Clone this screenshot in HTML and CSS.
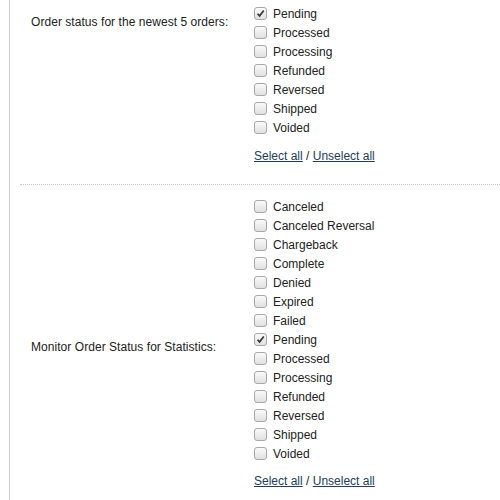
FILE: index.html
```html
<!DOCTYPE html>
<html>
<head>
<meta charset="utf-8">
<link rel="stylesheet" href="styles.css">
</head>
<body>
<div class="panel">
  <div class="row first">
    <div class="label top">Order status for the newest 5 orders:</div>
    <div class="options">
      <div class="opt"><span class="cb checked"><svg viewBox="0 0 12 12"><path d="M2.8 6.2 L5 8.6 L9.6 2.8" fill="none" stroke="#333" stroke-width="1.8"/></svg></span>Pending</div>
      <div class="opt"><span class="cb"></span>Processed</div>
      <div class="opt"><span class="cb"></span>Processing</div>
      <div class="opt"><span class="cb"></span>Refunded</div>
      <div class="opt"><span class="cb"></span>Reversed</div>
      <div class="opt"><span class="cb"></span>Shipped</div>
      <div class="opt"><span class="cb"></span>Voided</div>
      <div class="links"><a href="#">Select all</a> / <a href="#">Unselect all</a></div>
    </div>
  </div>
  <div class="row second">
    <div class="label mid">Monitor Order Status for Statistics:</div>
    <div class="options">
      <div class="opt"><span class="cb"></span>Canceled</div>
      <div class="opt"><span class="cb"></span>Canceled Reversal</div>
      <div class="opt"><span class="cb"></span>Chargeback</div>
      <div class="opt"><span class="cb"></span>Complete</div>
      <div class="opt"><span class="cb"></span>Denied</div>
      <div class="opt"><span class="cb"></span>Expired</div>
      <div class="opt"><span class="cb"></span>Failed</div>
      <div class="opt"><span class="cb checked"><svg viewBox="0 0 12 12"><path d="M2.8 6.2 L5 8.6 L9.6 2.8" fill="none" stroke="#333" stroke-width="1.8"/></svg></span>Pending</div>
      <div class="opt"><span class="cb"></span>Processed</div>
      <div class="opt"><span class="cb"></span>Processing</div>
      <div class="opt"><span class="cb"></span>Refunded</div>
      <div class="opt"><span class="cb"></span>Reversed</div>
      <div class="opt"><span class="cb"></span>Shipped</div>
      <div class="opt"><span class="cb"></span>Voided</div>
      <div class="links last"><a href="#">Select all</a> / <a href="#">Unselect all</a></div>
    </div>
  </div>
</div>
</body>
</html>
```
FILE: styles.css
```css
html, body {
  margin: 0;
  padding: 0;
  background: #fff;
}
body {
  font-family: "Liberation Sans", Arial, sans-serif;
  font-size: 12px;
  color: #222;
}
.panel {
  margin-left: 9px;
  border-left: 1px solid #ccc;
  padding-left: 10px;
  min-height: 500px;
}
.row {
  display: grid;
  grid-template-columns: 230px 1fr;
}
.row.first {
  padding-top: 5px;
  padding-bottom: 18px;
  border-bottom: 1px dotted #c8c8c8;
}
.row.second {
  padding-top: 13px;
}
.label {
  padding-left: 11px;
  line-height: 19px;
  letter-spacing: 0.05px;
}
.label.top {
  padding-top: 8px;
}
.label.mid {
  align-self: center;
  padding-top: 6px;
}
.options {
  padding-left: 4px;
}
.opt {
  display: flex;
  align-items: center;
  height: 19px;
  line-height: 19px;
}
.cb {
  box-sizing: border-box;
  width: 13px;
  height: 13px;
  margin-right: 6px;
  border: 1px solid #a8a8a8;
  border-radius: 3px;
  background: linear-gradient(#fafafa, #e0e0e0);
  display: inline-block;
  flex: none;
  position: relative;
  top: -1px;
}
.cb svg {
  display: block;
  width: 11px;
  height: 11px;
}
.links {
  margin-top: 9px;
  line-height: 19px;
  color: #222;
}
.links.last {
  margin-top: 8px;
}
.links a {
  color: #233c5b;
  text-decoration: underline;
}
```
